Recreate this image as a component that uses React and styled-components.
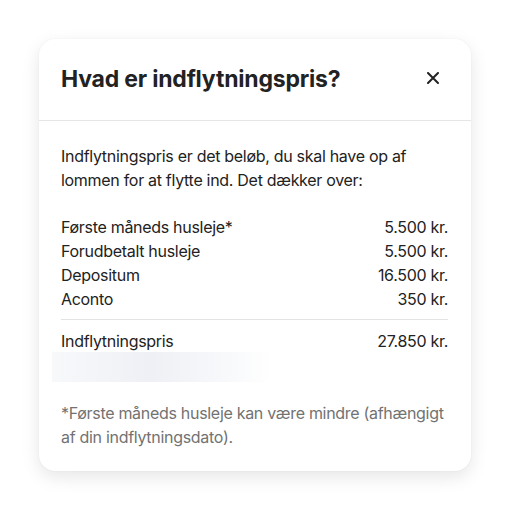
import React from 'react';
import styled, { createGlobalStyle } from 'styled-components';

const GlobalStyle = createGlobalStyle`
  html, body {
    margin: 0;
    padding: 0;
    background: #ffffff;
    font-family: Inter, "Liberation Sans", Arial, sans-serif;
    -webkit-font-smoothing: antialiased;
  }
`;

const Page = styled.div`
  width: 510px;
  height: 510px;
  padding: 39px 39px 0 39px;
  box-sizing: border-box;
`;

const Card = styled.div`
  width: 432px;
  background: #fff;
  border-radius: 16px;
  box-shadow: 0 6px 18px rgba(0, 0, 0, 0.1), 0 0 2px rgba(0, 0, 0, 0.06);
  color: #222;
`;

const Header = styled.div`
  display: flex;
  align-items: center;
  justify-content: space-between;
  height: 81px;
  padding: 0 30px 0 22px;
  border-bottom: 1px solid #e6e6e6;
`;

const Title = styled.h2`
  margin: 0 0 2px;
  font-size: 23px;
  font-weight: 700;
  letter-spacing: -0.2px;
  color: #222;
`;

const CloseButton = styled.button`
  border: none;
  background: none;
  padding: 0;
  width: 16px;
  height: 16px;
  margin-bottom: 4px;
  display: flex;
  align-items: center;
  justify-content: center;
  cursor: pointer;
  color: #222;
`;

const Body = styled.div`
  padding: 23px 23px 22px 22px;
  font-size: 16px;
  line-height: 24px;
  letter-spacing: -0.3px;
`;

const Intro = styled.p`
  margin: 0 0 23px;
`;

const Row = styled.div`
  display: flex;
  justify-content: space-between;
  line-height: 24px;
`;

const Divider = styled.hr`
  border: none;
  border-top: 1px solid #e3e3e3;
  margin: 8px 0 9px;
`;

const Smudge = styled.div`
  margin: -1px 0 0 -9px;
  width: 220px;
  height: 30px;
  background: linear-gradient(
    90deg,
    rgba(240, 242, 246, 0.5) 0%,
    rgba(238, 240, 245, 1) 45%,
    rgba(244, 246, 249, 0.8) 75%,
    rgba(255, 255, 255, 0) 100%
  );
`;

const Footnote = styled.p`
  margin: 19px 0 0;
  color: #727272;
`;

const items = [
  { label: 'Første måneds husleje*', value: '5.500 kr.' },
  { label: 'Forudbetalt husleje', value: '5.500 kr.' },
  { label: 'Depositum', value: '16.500 kr.' },
  { label: 'Aconto', value: '350 kr.' },
];

const App = () => (
  <>
    <GlobalStyle />
    <Page>
      <Card>
        <Header>
          <Title>Hvad er indflytningspris?</Title>
          <CloseButton aria-label="Luk">
            <svg width="12" height="12" viewBox="0 0 12 12">
              <path d="M1 1L11 11M11 1L1 11" stroke="currentColor" strokeWidth="2" strokeLinecap="round" />
            </svg>
          </CloseButton>
        </Header>
        <Body>
          <Intro>
            Indflytningspris er det beløb, du skal have op af lommen for at flytte ind. Det dækker over:
          </Intro>
          {items.map((it) => (
            <Row key={it.label}>
              <span>{it.label}</span>
              <span>{it.value}</span>
            </Row>
          ))}
          <Divider />
          <Row>
            <span>Indflytningspris</span>
            <span>27.850 kr.</span>
          </Row>
          <Smudge />
          <Footnote>
            *Første måneds husleje kan være mindre (afhængigt af din indflytningsdato).
          </Footnote>
        </Body>
      </Card>
    </Page>
  </>
);

export default App;
